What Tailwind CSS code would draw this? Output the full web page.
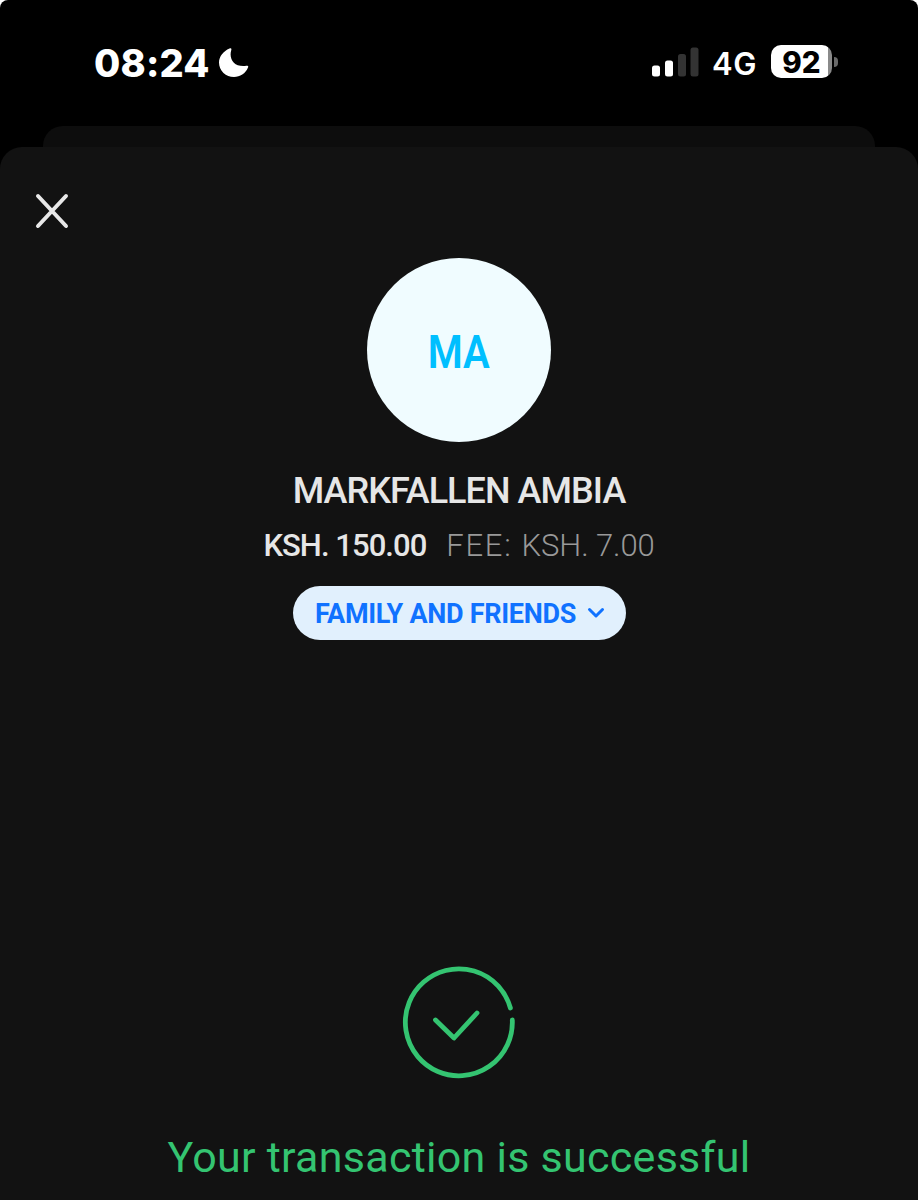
<!DOCTYPE html>
<html lang="en">
<head>
    <meta charset="UTF-8">
    <meta name="viewport" content="width=device-width, initial-scale=1.0">
    <title>Transaction successful</title>
    <script src="https://cdn.jsdelivr.net/npm/@tailwindcss/browser@4"></script>
</head>
<body class="bg-white font-['Roboto',sans-serif]">
    <div class="flex h-[1200px] w-[918px] flex-col overflow-hidden rounded-t-[8px] bg-black">
        <!-- Status bar -->
        <header class="flex h-[126px] shrink-0 justify-between pt-[42px] pr-[80px] pl-[94px] font-['Inter',sans-serif] text-white">
            <div class="flex h-[42px] items-center">
                <span class="w-[125px] text-[38px] font-extrabold tracking-[0.2px] whitespace-nowrap">08:24</span>
                <svg class="h-[30px] w-[30px]" viewBox="0 0 30 30" fill="currentColor">
                    <path d="M10.500 0.500C12 -0.300 12.700 .5 12.300 2C9.600 11 15 19 26 18C28.500 17.300 29.800 17.500 29 19.500C26.500 25.500 21 29 15 29C7 29 0 23 0 14.500C0 8.500 4.500 3 10.500 0.500Z" />
                </svg>
            </div>
            <div class="flex h-[42px] items-center pb-[3px]">
                <svg class="mr-[13px] h-[30px] w-[47px]" viewBox="0 0 47 30">
                    <rect x="0" y="18.500" width="8" height="11" rx="2.500" fill="#fff" />
                    <rect x="13" y="13.500" width="8" height="16" rx="2.500" fill="#fff" />
                    <rect x="26" y="7" width="8" height="22.500" rx="2.500" fill="#333" />
                    <rect x="38.500" y="0.500" width="8" height="29" rx="2.500" fill="#333" />
                </svg>
                <span class="w-[59px] pt-[6px] text-[31px] font-semibold tracking-[0.5px] whitespace-nowrap">4G</span>
                <div class="flex h-[33px] w-[61px] items-center justify-center rounded-[10px] bg-linear-to-r from-white from-93% to-[#8a8a8a] to-93% pt-[2px] text-[29.5px] font-extrabold text-black">92</div>
                <div class="ml-[2px] h-[10px] w-[4px] rounded-r-full bg-[#6a6a6a]"></div>
            </div>
        </header>

        <!-- Edge of the screen behind the sheet -->
        <div class="mx-[43px] h-[21px] shrink-0 rounded-t-[20px] bg-[#0d0d0d]"></div>

        <!-- Sheet -->
        <main class="flex flex-1 flex-col items-center rounded-t-[22px] bg-[#121212]">
            <button class="mt-[46px] ml-[35px] self-start">
                <svg class="h-[36px] w-[34px]" viewBox="0 0 34 36" fill="none" stroke="#e8e8e8" stroke-width="4" stroke-linecap="round">
                    <path d="M3 3L31 33M31 3L3 33" />
                </svg>
            </button>

            <div class="mt-[29px] flex h-[184px] w-[184px] items-center justify-center rounded-full bg-[#f0fcff] pt-[4px] text-[46px] font-semibold text-[#00bfff]">
                <span class="scale-x-[0.87]">MA</span>
            </div>

            <h1 class="mt-[26px] text-[36px] leading-[46px] font-medium tracking-[-0.95px] whitespace-nowrap text-[#e6e6e6]">MARKFALLEN AMBIA</h1>
            <p class="mt-[12px] flex gap-[20px] text-[31px] leading-[40px] whitespace-nowrap">
                <span class="font-medium tracking-[-0.95px] text-[#e6e6e6]">KSH. 150.00</span>
                <span class="font-light text-[#999]"><span class="tracking-[1.7px]">FEE: </span><span class="tracking-[-0.1px]">KSH. 7.00</span></span>
            </p>

            <button class="mt-[20px] flex h-[54px] w-[333px] items-center gap-[10px] rounded-full bg-[#e1f0fd] pl-[22px] text-[27px] font-bold tracking-[-0.3px] whitespace-nowrap text-[#1072ff]">
                <span class="w-[262px] pt-[3px]">FAMILY AND FRIENDS</span>
                <svg class="h-[12px] w-[18px]" viewBox="0 0 18 12" fill="none" stroke="currentColor" stroke-width="3" stroke-linecap="round" stroke-linejoin="round">
                    <path d="M2.500 2.500L9 9L15.500 2.500" />
                </svg>
            </button>

            <svg class="mt-[325px] h-[114px] w-[114px] shrink-0" viewBox="0 0 114 114" fill="none" stroke="#34c471" stroke-width="4.800" stroke-linecap="round" stroke-linejoin="round">
                <path d="M110.300 55A53.500 53.500 0 1 1 108.400 43" />
                <path d="M33.500 55L52 73L75 48" />
            </svg>

            <p class="mt-[50px] text-[43px] leading-[56px] tracking-[0.27px] whitespace-nowrap text-[#34c471]">Your transaction is successful</p>
        </main>
    </div>
</body>
</html>
